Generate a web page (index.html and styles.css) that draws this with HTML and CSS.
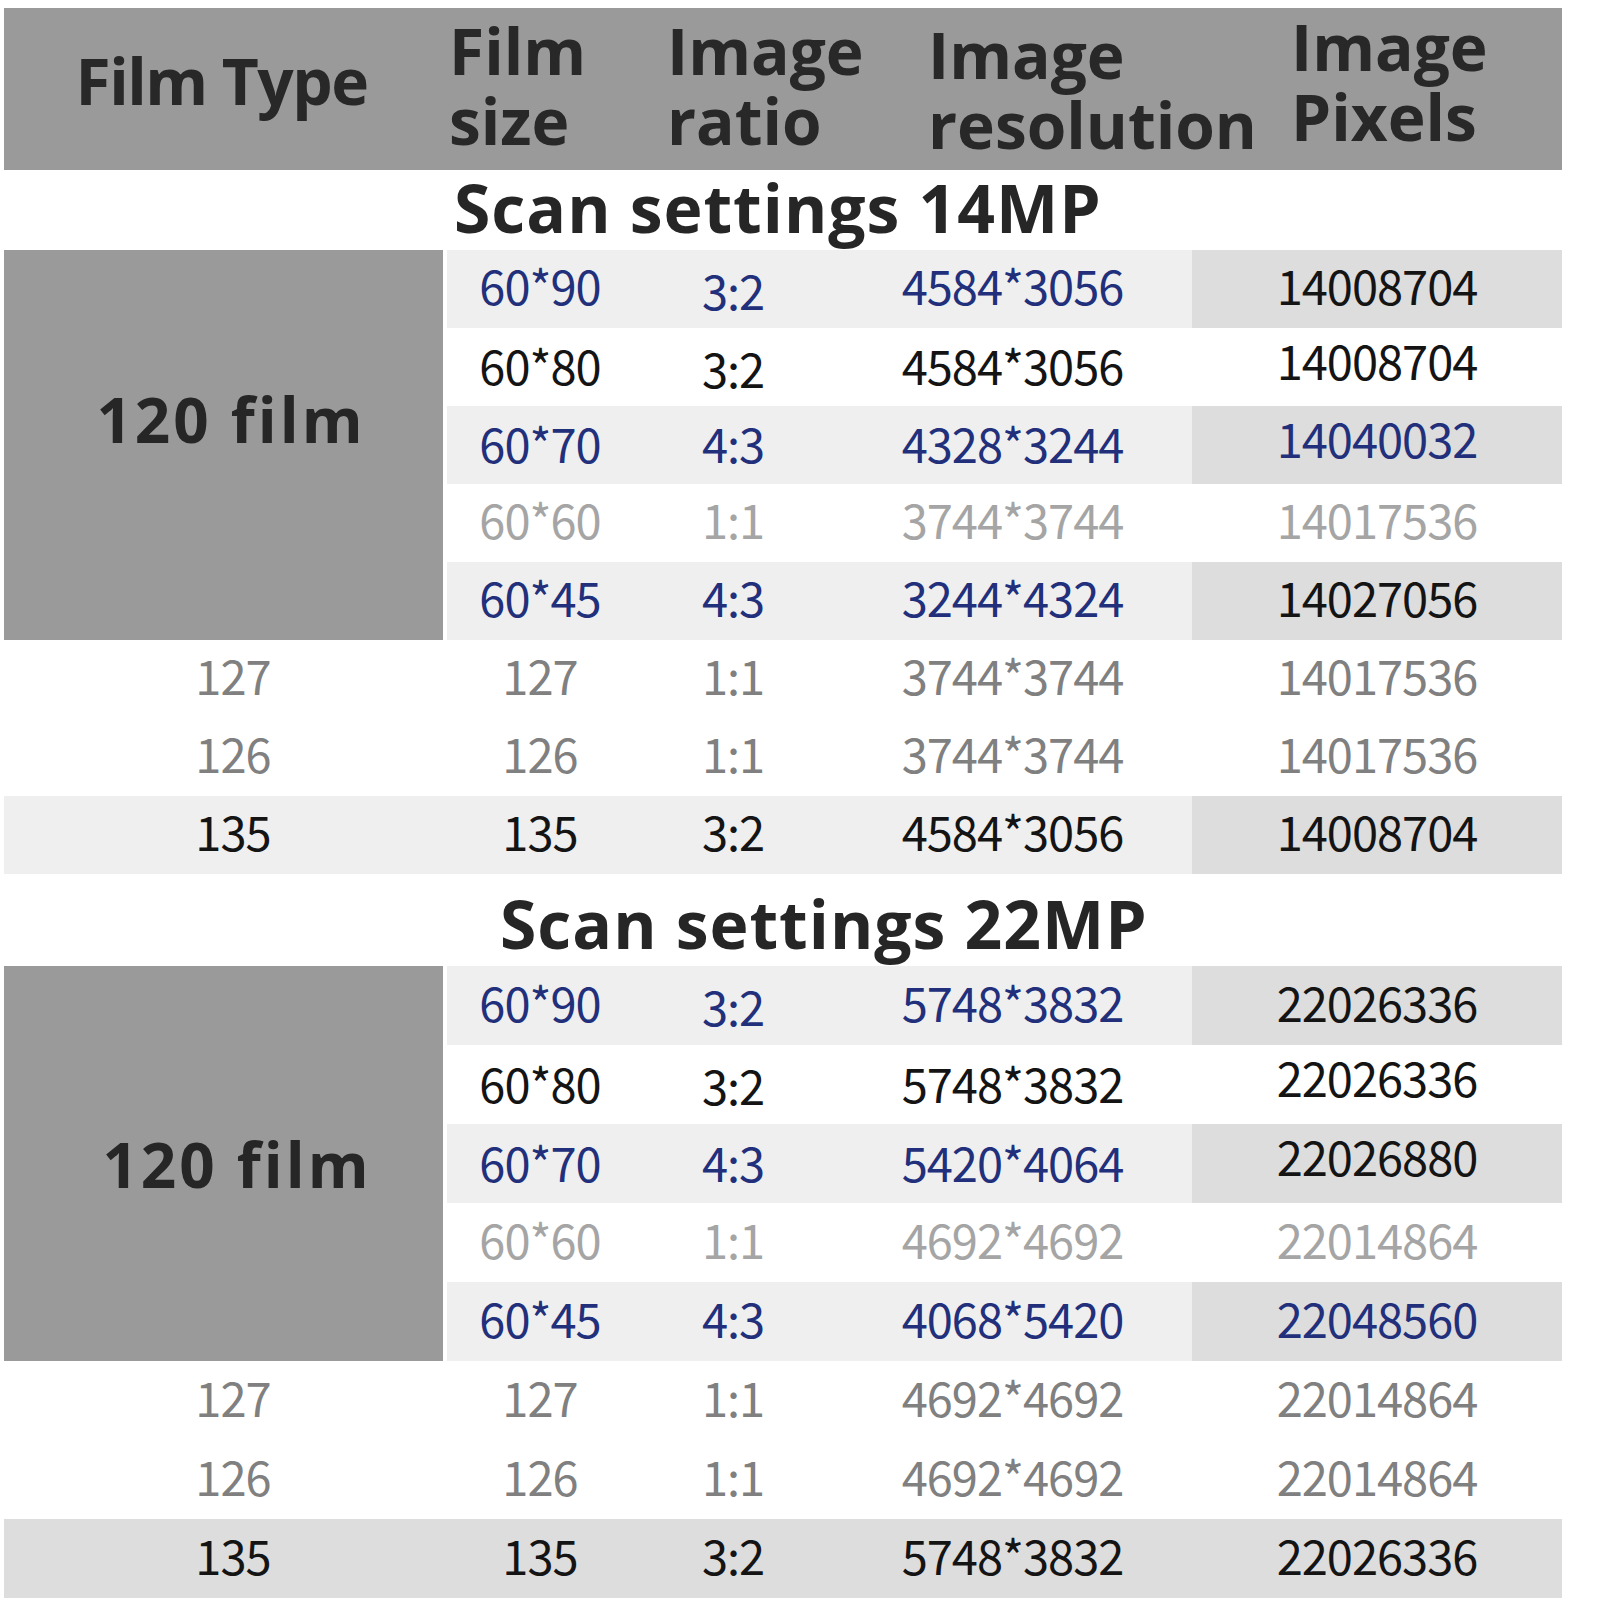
FILE: index.html
```html
<!DOCTYPE html>
<html lang="en">
<head>
<meta charset="utf-8">
<title>Scan settings</title>
<link rel="stylesheet" href="styles.css">
</head>
<body>
<div class="sheet">
  <div class="head">
    <div class="h h-type"><div class="ln">Film Type</div></div>
    <div class="h"><div class="ln">Film</div><div class="ln">size</div></div>
    <div class="h"><div class="ln">Image</div><div class="ln">ratio</div></div>
    <div class="h h-res"><div class="ln">Image</div><div class="ln">resolution</div></div>
    <div class="h h-pix"><div class="ln">Image</div><div class="ln">Pixels</div></div>
  </div>

  <div class="title title-14">Scan settings 14MP</div>
  <div class="grid s14">
    <div class="c group g14">120 film</div>
    <div class="c lt blue">60*90</div><div class="c lt blue low">3:2</div><div class="c lt blue">4584*3056</div><div class="c dk black">14008704</div>
    <div class="c black mid">60*80</div><div class="c black low">3:2</div><div class="c black mid">4584*3056</div><div class="c black high">14008704</div>
    <div class="c lt blue mid">60*70</div><div class="c lt blue mid">4:3</div><div class="c lt blue mid">4328*3244</div><div class="c dk blue high">14040032</div>
    <div class="c pale">60*60</div><div class="c pale">1:1</div><div class="c pale">3744*3744</div><div class="c pale">14017536</div>
    <div class="c lt blue">60*45</div><div class="c lt blue">4:3</div><div class="c lt blue">3244*4324</div><div class="c dk black">14027056</div>
    <div class="c gray first">127</div><div class="c gray">127</div><div class="c gray">1:1</div><div class="c gray">3744*3744</div><div class="c gray">14017536</div>
    <div class="c gray first">126</div><div class="c gray">126</div><div class="c gray">1:1</div><div class="c gray">3744*3744</div><div class="c gray">14017536</div>
    <div class="c lt black first">135</div><div class="c lt black">135</div><div class="c lt black">3:2</div><div class="c lt black">4584*3056</div><div class="c dk black">14008704</div>
  </div>

  <div class="title title-22">Scan settings 22MP</div>
  <div class="grid s22">
    <div class="c group g22">120 film</div>
    <div class="c lt blue">60*90</div><div class="c lt blue low">3:2</div><div class="c lt blue">5748*3832</div><div class="c dk black">22026336</div>
    <div class="c black mid">60*80</div><div class="c black low">3:2</div><div class="c black mid">5748*3832</div><div class="c black high">22026336</div>
    <div class="c lt blue mid">60*70</div><div class="c lt blue mid">4:3</div><div class="c lt blue mid">5420*4064</div><div class="c dk black high">22026880</div>
    <div class="c pale">60*60</div><div class="c pale">1:1</div><div class="c pale">4692*4692</div><div class="c pale">22014864</div>
    <div class="c lt blue">60*45</div><div class="c lt blue">4:3</div><div class="c lt blue">4068*5420</div><div class="c dk blue">22048560</div>
    <div class="c gray first">127</div><div class="c gray">127</div><div class="c gray">1:1</div><div class="c gray">4692*4692</div><div class="c gray">22014864</div>
    <div class="c gray first">126</div><div class="c gray">126</div><div class="c gray">1:1</div><div class="c gray">4692*4692</div><div class="c gray">22014864</div>
    <div class="c dk black first">135</div><div class="c dk black">135</div><div class="c dk black">3:2</div><div class="c dk black">5748*3832</div><div class="c dk black">22026336</div>
  </div>
</div>
</body>
</html>
```

FILE: styles.css
```css
html, body {
  margin: 0;
  padding: 0;
  background: #ffffff;
}

.sheet {
  width: 1558px;
  margin: 8px 0 0 4px;
}

/* header band */
.head {
  height: 162px;
  background: #9a9a9a;
  display: grid;
  grid-template-columns: 443px 218px 261px 363px 273px;
  align-items: center;
  font-family: "Open Sans", "Noto Sans", sans-serif;
  font-weight: 700;
  font-size: 64px;
  color: #282828;
}

.h {
  padding-left: 2px;
  padding-bottom: 6px;
  white-space: nowrap;
}

.ln {
  height: 70px;
  line-height: 70px;
}

.h-type {
  text-align: center;
  padding: 0 8px 16px 0;
}

.h-type .ln {
  letter-spacing: -1.5px;
}

.h-res {
  padding-top: 8px;
}

.h-pix {
  padding-bottom: 14px;
}

/* section titles */
.title {
  font-family: "Open Sans", "Noto Sans", sans-serif;
  font-weight: 700;
  font-size: 66px;
  letter-spacing: 1px;
  color: #262626;
  white-space: nowrap;
  display: flex;
  align-items: center;
}

.title-14 {
  height: 80px;
  padding-left: 450px;
  padding-bottom: 6px;
  box-sizing: border-box;
}

.title-22 {
  height: 92px;
  padding-left: 496px;
  padding-top: 6px;
  box-sizing: border-box;
}

/* data grid */
.grid {
  display: grid;
  grid-template-columns: 443px 186px 200px 359px 370px;
  font-family: "Noto Sans CJK SC", "Noto Sans", sans-serif;
  font-size: 47px;
  letter-spacing: -1px;
}

.s14 {
  grid-auto-rows: 78px;
}

.s22 {
  grid-auto-rows: 79px;
}

.c {
  display: flex;
  align-items: center;
  justify-content: center;
  white-space: nowrap;
  padding-bottom: 9px;
}

.first {
  padding-left: 15px;
}

.group {
  grid-row: span 5;
  background: #9a9a9a;
  border-right: 4px solid #ffffff;
  font-family: "Open Sans", "Noto Sans", sans-serif;
  font-weight: 700;
  font-size: 62px;
  letter-spacing: 3px;
  color: #262626;
  padding-left: 15px;
  padding-bottom: 0;
}

.g14 {
  padding-bottom: 52px;
}

.g22 {
  padding-left: 27px;
}

.lt { background: #efefef; }
.dk { background: #dddddd; }

.blue  { color: #22307c; }
.black { color: #141414; }
.pale  { color: #a5a5a5; }
.gray  { color: #808080; }

.low  { padding-bottom: 0; padding-top: 0; }
.mid  { padding-bottom: 5px; }
.high { padding-bottom: 16px; }
```
